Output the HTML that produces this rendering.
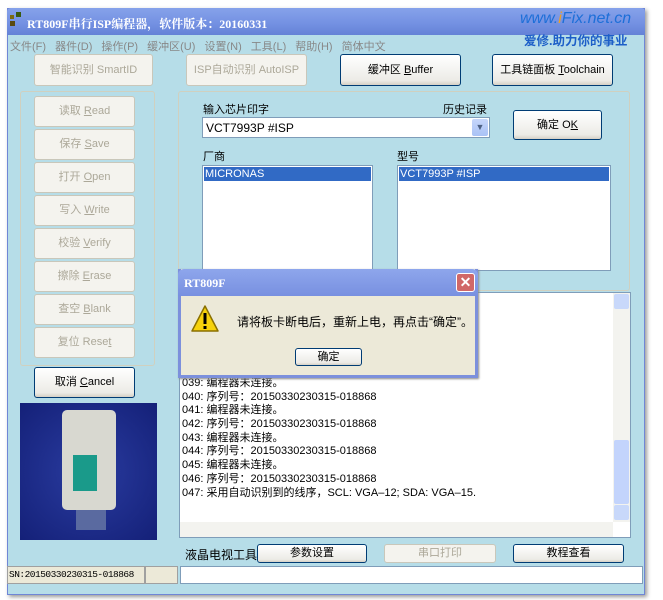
<!DOCTYPE html>
<html><head><meta charset="utf-8"><style>
*{box-sizing:border-box;margin:0;padding:0}
body{width:663px;height:600px;background:#fff;position:relative;overflow:hidden;font-family:"Liberation Sans","Noto Sans CJK SC",sans-serif;font-size:11px;color:#000}
.a{position:absolute}
.btn{position:absolute;border:1px solid #003c74;border-radius:3px;background:linear-gradient(#fff,#ecebe6 85%,#d6d0c5);text-align:center;font-size:11px;white-space:nowrap}
.dis{border-color:#c9c7ba;background:#f4f3ee;color:#aca899}
.grp{position:absolute;border:1px solid #d0d0bf;border-radius:3px}
.log div{height:13.7px;line-height:13.7px;font-size:11px;white-space:nowrap}
</style></head><body>
<div class="a" style="left:7px;top:8px;width:638px;height:587px;background:#b6dde8;border:1px solid #6f86d6;box-shadow:2px 2px 4px #999"></div>
<div class="a" style="left:7px;top:8px;width:638px;height:27px;background:linear-gradient(#86a2ea,#7390e2 60%,#6482d6);border-radius:4px 4px 0 0"></div>
<div class="a" style="left:10px;top:15px;width:4px;height:4px;background:#7a6a10"></div>
<div class="a" style="left:16px;top:12px;width:5px;height:5px;background:#3a5a10"></div>
<div class="a" style="left:10px;top:21px;width:5px;height:5px;background:#5a4a10"></div>
<div class="a" style="left:27px;top:15px;color:#fff;font-family:'Liberation Serif','Noto Serif CJK SC',serif;font-weight:bold;font-size:12px">RT809F串行ISP编程器，软件版本：20160331</div>
<div class="a" style="left:520px;top:10px;color:#1d6fd8;font-style:italic;font-size:16px">www.<span style="color:#f0a020">i</span>Fix.net.cn</div>
<div class="a" style="left:524px;top:30px;color:#1d5fc8;font-weight:bold;font-size:12.5px">爱修.助力你的事业</div>
<div class="a" style="left:10px;top:38px;color:#888;font-size:11px;word-spacing:6px">文件(F) 器件(D) 操作(P) 缓冲区(U) 设置(N) 工具(L) 帮助(H) 简体中文</div>
<div class="btn dis" style="left:34px;top:54px;width:119px;height:32px;line-height:30px">智能识别 SmartID</div>
<div class="btn dis" style="left:186px;top:54px;width:121px;height:32px;line-height:30px">ISP自动识别 AutoISP</div>
<div class="btn" style="left:340px;top:54px;width:121px;height:32px;line-height:30px">缓冲区 <u>B</u>uffer</div>
<div class="btn" style="left:492px;top:54px;width:121px;height:32px;line-height:30px">工具链面板 <u>T</u>oolchain</div>
<div class="grp" style="left:20px;top:91px;width:135px;height:275px"></div>
<div class="btn dis" style="left:34px;top:96px;width:101px;height:31px;line-height:29px">读取 <u>R</u>ead</div>
<div class="btn dis" style="left:34px;top:129px;width:101px;height:31px;line-height:29px">保存 <u>S</u>ave</div>
<div class="btn dis" style="left:34px;top:162px;width:101px;height:31px;line-height:29px">打开 <u>O</u>pen</div>
<div class="btn dis" style="left:34px;top:195px;width:101px;height:31px;line-height:29px">写入 <u>W</u>rite</div>
<div class="btn dis" style="left:34px;top:228px;width:101px;height:31px;line-height:29px">校验 <u>V</u>erify</div>
<div class="btn dis" style="left:34px;top:261px;width:101px;height:31px;line-height:29px">擦除 <u>E</u>rase</div>
<div class="btn dis" style="left:34px;top:294px;width:101px;height:31px;line-height:29px">查空 <u>B</u>lank</div>
<div class="btn dis" style="left:34px;top:327px;width:101px;height:31px;line-height:29px">复位 Rese<u>t</u></div>
<div class="btn" style="left:34px;top:367px;width:101px;height:31px;line-height:29px">取消 <u>C</u>ancel</div>
<div class="a" style="left:20px;top:403px;width:137px;height:137px;background:radial-gradient(#2a3ca0,#142078)"></div>
<div class="a" style="left:62px;top:410px;width:54px;height:100px;background:#d8d8d0;border-radius:5px"></div>
<div class="a" style="left:73px;top:455px;width:24px;height:36px;background:#1a9a8a"></div>
<div class="a" style="left:76px;top:510px;width:30px;height:20px;background:#5a6aa0"></div>
<div class="grp" style="left:178px;top:91px;width:452px;height:200px"></div>
<div class="a" style="left:203px;top:101px">输入芯片印字</div>
<div class="a" style="left:443px;top:101px">历史记录</div>
<div class="a" style="left:202px;top:117px;width:288px;height:21px;background:#fff;border:1px solid #7f9db9;padding:3px 3px;font-size:12px">VCT7993P #ISP</div>
<div class="a" style="left:472px;top:119px;width:16px;height:17px;background:linear-gradient(#c6d6fb,#a9c2f5);border-radius:2px;color:#4d6185;text-align:center;font-size:9px;line-height:17px">▼</div>
<div class="btn" style="left:513px;top:110px;width:89px;height:30px;line-height:28px">确定 O<u>K</u></div>
<div class="a" style="left:203px;top:148px">厂商</div>
<div class="a" style="left:397px;top:148px">型号</div>
<div class="a" style="left:202px;top:165px;width:171px;height:106px;background:#fff;border:1px solid #7f9db9"></div>
<div class="a" style="left:204px;top:167px;width:167px;height:14px;background:#316ac5;color:#fff;padding-left:1px;font-size:11px;line-height:14px">MICRONAS</div>
<div class="a" style="left:397px;top:165px;width:214px;height:106px;background:#fff;border:1px solid #7f9db9"></div>
<div class="a" style="left:399px;top:167px;width:210px;height:14px;background:#316ac5;color:#fff;padding-left:1px;font-size:11px;line-height:14px">VCT7993P #ISP</div>
<div class="a" style="left:179px;top:292px;width:452px;height:246px;background:#fff;border:1px solid #7f9db9"></div>
<div class="a" style="left:613px;top:293px;width:17px;height:229px;background:#f3f3ef"></div>
<div class="a" style="left:614px;top:294px;width:15px;height:15px;background:#c8d8fa;border-radius:2px"></div>
<div class="a" style="left:614px;top:440px;width:15px;height:64px;background:#c3d4fc;border-radius:2px"></div>
<div class="a" style="left:614px;top:505px;width:15px;height:15px;background:#c8d8fa;border-radius:2px"></div>
<div class="a" style="left:180px;top:522px;width:433px;height:15px;background:#f3f3ef"></div>
<div class="a log" style="left:182px;top:377px">
<div>039: 编程器未连接。</div><div>040: 序列号：20150330230315-018868</div><div>041: 编程器未连接。</div><div>042: 序列号：20150330230315-018868</div><div>043: 编程器未连接。</div><div>044: 序列号：20150330230315-018868</div><div>045: 编程器未连接。</div><div>046: 序列号：20150330230315-018868</div><div>047: 采用自动识别到的线序，SCL: VGA–12; SDA: VGA–15.</div></div>
<div class="a" style="left:185px;top:546px;font-size:12px">液晶电视工具</div>
<div class="btn" style="left:257px;top:544px;width:110px;height:19px;line-height:17px">参数设置</div>
<div class="btn dis" style="left:384px;top:544px;width:112px;height:19px;line-height:17px">串口打印</div>
<div class="btn" style="left:513px;top:544px;width:111px;height:19px;line-height:17px">教程查看</div>
<div class="a" style="left:7px;top:566px;width:138px;height:18px;border:1px solid #a0a0a0;background:#ece9d8;font-family:'Liberation Mono',monospace;font-size:9.5px;padding:0 1px;line-height:16px;white-space:nowrap;overflow:hidden;letter-spacing:-0.5px">SN:20150330230315-018868</div>
<div class="a" style="left:145px;top:566px;width:33px;height:18px;border:1px solid #a0a0a0;background:#ece9d8"></div>
<div class="a" style="left:180px;top:566px;width:463px;height:18px;border:1px solid #7f9db9;background:#fff"></div>
<div class="a" style="left:178px;top:269px;width:300px;height:109px;background:#ece9d8;border:3px solid #7c90dc;border-top:none;box-shadow:1px 1px 2px #888"></div>
<div class="a" style="left:178px;top:269px;width:300px;height:27px;background:linear-gradient(#8ea6ec,#7890e0);border-radius:6px 6px 0 0"></div>
<div class="a" style="left:184px;top:276px;color:#fff;font-family:'Liberation Serif',serif;font-weight:bold;font-size:12px">RT809F</div>
<div class="a" style="left:456px;top:273px;width:19px;height:19px;background:#d06868;border:1px solid #fff;border-radius:3px;color:#fff;text-align:center;font-size:14px;line-height:17px;font-weight:bold">✕</div>
<svg class="a" style="left:190px;top:304px" width="30" height="30"><path d="M15 2 L28 27 H2 Z" fill="#f6d20c" stroke="#8a7000" stroke-width="1.5" stroke-linejoin="round"/><rect x="13.5" y="9" width="3" height="11" fill="#000"/><rect x="13.5" y="22" width="3" height="3" fill="#000"/></svg>
<div class="a" style="left:237px;top:313px;font-size:12px">请将板卡断电后，重新上电，再点击“确定”。</div>
<div class="btn" style="left:295px;top:348px;width:67px;height:18px;line-height:16px">确定</div>
</body></html>
